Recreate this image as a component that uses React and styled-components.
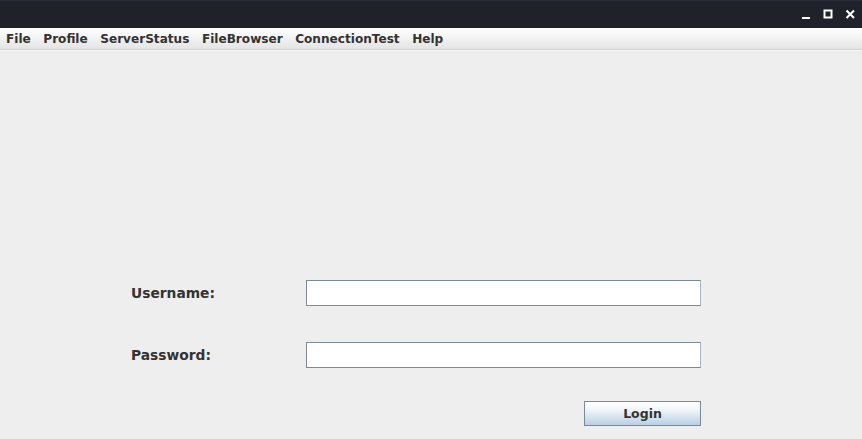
import React from "react";
import styled, { createGlobalStyle } from "styled-components";

const GlobalStyle = createGlobalStyle`
  html, body {
    margin: 0;
    padding: 0;
    background: #eeeeee;
  }
  body {
    font-family: "DejaVu Sans", "Liberation Sans", sans-serif;
  }
`;

const StyledWindow = styled.div`
  width: 862px;
  height: 439px;
  display: flex;
  flex-direction: column;
  background: #eeeeee;
  overflow: hidden;
`;

const StyledTitleBar = styled.div`
  height: 28px;
  flex: none;
  background: #1f212b;
  border-top: 1px solid #2b2e3a;
  box-sizing: border-box;
  display: flex;
  justify-content: flex-end;
  align-items: center;
  padding-right: 5px;
  gap: 9px;
`;

const StyledControl = styled.svg`
  width: 13px;
  height: 13px;
  display: block;
`;

const StyledMenuBar = styled.div`
  height: 21px;
  flex: none;
  background: linear-gradient(#ffffff, #e4e4e4);
  border-bottom: 1px solid #d2d2d2;
  box-shadow: 0 1px 0 #f6f6f6;
  display: flex;
  align-items: center;
`;

const StyledMenuItem = styled.span`
  font-size: 12.1px;
  font-weight: bold;
  color: #333333;
  padding: 1px 6.5px 0 6px;
  line-height: 20px;
`;

const StyledContent = styled.div`
  flex: 1;
  display: flex;
  flex-direction: column;
  justify-content: flex-end;
  padding: 0 161px 13px 131px;
`;

const StyledForm = styled.div`
  display: grid;
  grid-template-columns: 175px 395px;
  grid-template-rows: 26px 36px 26px 33px 25px;
  align-items: center;
`;

const StyledLabel = styled.label`
  grid-column: 1;
  grid-row: ${({ $row }) => $row};
  font-size: 13.8px;
  font-weight: bold;
  color: #333333;
`;

const StyledField = styled.input`
  grid-column: 2;
  grid-row: ${({ $row }) => $row};
  box-sizing: border-box;
  width: 395px;
  height: 26px;
  background: #ffffff;
  border: 1px solid #7a8a99;
  border-right-color: #a9b6c2;
  outline: none;
  margin: 0;
  padding: 0 4px;
  font-family: inherit;
`;

const StyledButtonRow = styled.div`
  grid-column: 2;
  grid-row: 5;
  display: flex;
  justify-content: flex-end;
`;

const StyledButton = styled.button`
  box-sizing: border-box;
  width: 117px;
  height: 25px;
  background: linear-gradient(#ffffff 0%, #f1f5f9 35%, #b9cfe4 100%);
  border: 1px solid #7a8a99;
  font-family: inherit;
  font-size: 12.5px;
  font-weight: bold;
  color: #333333;
  padding: 0;
`;

const menus = ["File", "Profile", "ServerStatus", "FileBrowser", "ConnectionTest", "Help"];

const App = () => {
  return (
    <StyledWindow>
      <GlobalStyle />
      <StyledTitleBar>
        <StyledControl viewBox="0 0 13 13">
          <rect x="2" y="9" width="8" height="2" fill="#ffffff" />
        </StyledControl>
        <StyledControl viewBox="0 0 13 13">
          <rect x="2.5" y="2.5" width="7" height="7" fill="none" stroke="#ffffff" strokeWidth="2" />
        </StyledControl>
        <StyledControl viewBox="0 0 13 13">
          <path d="M2.5 2.5 L10 10 M10 2.5 L2.5 10" stroke="#ffffff" strokeWidth="2" />
        </StyledControl>
      </StyledTitleBar>
      <StyledMenuBar>
        {menus.map((m) => (
          <StyledMenuItem key={m}>{m}</StyledMenuItem>
        ))}
      </StyledMenuBar>
      <StyledContent>
        <StyledForm>
          <StyledLabel $row={1}>Username:</StyledLabel>
          <StyledField $row={1} type="text" />
          <StyledLabel $row={3}>Password:</StyledLabel>
          <StyledField $row={3} type="password" />
          <StyledButtonRow>
            <StyledButton>Login</StyledButton>
          </StyledButtonRow>
        </StyledForm>
      </StyledContent>
    </StyledWindow>
  );
};

export default App;
